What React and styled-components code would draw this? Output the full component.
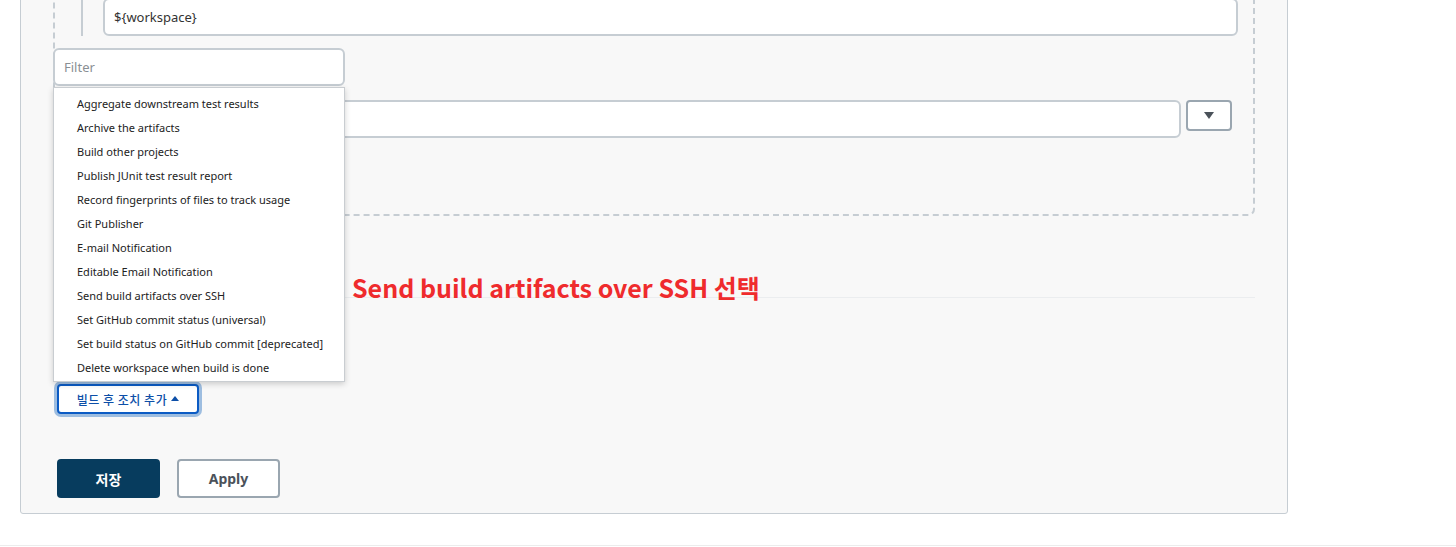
import styled, { createGlobalStyle } from 'styled-components';

const GlobalStyle = createGlobalStyle`
    html, body {
        margin: 0;
        padding: 0;
        background: #ffffff;
    }
    body {
        font-family: "Noto Sans", "Noto Sans CJK KR", sans-serif;
        color: #333;
    }
`;

const actions = [
    'Aggregate downstream test results',
    'Archive the artifacts',
    'Build other projects',
    'Publish JUnit test result report',
    'Record fingerprints of files to track usage',
    'Git Publisher',
    'E-mail Notification',
    'Editable Email Notification',
    'Send build artifacts over SSH',
    'Set GitHub commit status (universal)',
    'Set build status on GitHub commit [deprecated]',
    'Delete workspace when build is done',
];

const App = () => {
    return (
        <Page>
            <GlobalStyle />
            <Panel>
                <DashedBox>
                    <Nested>
                        <TextInput defaultValue="${workspace}" />
                    </Nested>
                    <SelectRow>
                        <TextInput />
                        <ArrowButton>
                            <span className="tri" />
                        </ArrowButton>
                    </SelectRow>
                </DashedBox>

                <Section>
                    <Annotation>Send build artifacts over SSH 선택</Annotation>
                </Section>

                <AddWrap>
                    <Popup>
                        <Filter placeholder="Filter" />
                        <Menu>
                            {actions.map((a) => (
                                <MenuItem key={a}>{a}</MenuItem>
                            ))}
                        </Menu>
                    </Popup>
                    <AddButton>
                        빌드 후 조치 추가 <span className="up" />
                    </AddButton>
                </AddWrap>

                <Footer>
                    <SaveButton>저장</SaveButton>
                    <ApplyButton>Apply</ApplyButton>
                </Footer>
            </Panel>
            <BottomRule />
        </Page>
    );
};

const Page = styled.div`
    height: 547px;
    overflow: hidden;
`;

const Panel = styled.div`
    margin: -71px 0 0 20px;
    width: 1202px;
    padding: 20px 32px 15px 32px;
    background: #f8f8f8;
    border: 1px solid #c6cdd3;
    border-radius: 3px;
`;

const DashedBox = styled.div`
    border: 2px dashed #c6cdd3;
    border-radius: 7px;
    padding: 10px 15px 76px 26px;
    width: 1157px;
`;

const Nested = styled.div`
    border-left: 2px solid #c6cdd3;
    padding: 36px 0 0 20px;
`;

const TextInput = styled.input`
    box-sizing: border-box;
    display: block;
    width: 100%;
    height: 38px;
    padding: 0 9px;
    border: 2px solid #c6cdd3;
    border-radius: 6px;
    background: #fff;
    font-family: "Noto Sans", sans-serif;
    font-size: 13px;
    color: #333;
    outline: none;
`;

const SelectRow = styled.div`
    display: flex;
    align-items: flex-start;
    gap: 5px;
    margin: 64px 6px 0 0;
    ${TextInput} {
        flex: 1;
    }
`;

const ArrowButton = styled.button`
    box-sizing: border-box;
    width: 46px;
    height: 31px;
    border: 2px solid #9aa6b0;
    border-radius: 4px;
    background: #fff;
    display: flex;
    align-items: center;
    justify-content: center;
    padding: 0;
    .tri {
        width: 0;
        height: 0;
        border-left: 5px solid transparent;
        border-right: 5px solid transparent;
        border-top: 7px solid #4b525a;
    }
`;

const Section = styled.div`
    position: relative;
    margin-top: 81px;
    border-top: 1px solid #ebedef;
    height: 86px;
`;

const Annotation = styled.div`
    position: absolute;
    left: 299px;
    top: -27px;
    font-family: "Noto Sans CJK KR", "Noto Sans", sans-serif;
    font-weight: 700;
    font-size: 25px;
    color: #ef2b2d;
    white-space: nowrap;
    line-height: 32px;
`;

const AddWrap = styled.div`
    position: relative;
    padding-left: 4px;
`;

const Popup = styled.div`
    position: absolute;
    left: 0;
    bottom: calc(100% + 2px);
    width: 292px;
    z-index: 2;
`;

const Filter = styled.input`
    box-sizing: border-box;
    display: block;
    width: 100%;
    height: 38px;
    padding: 0 9px;
    border: 2px solid #c6cdd3;
    border-radius: 6px;
    background: #fff;
    font-family: "Noto Sans", sans-serif;
    font-size: 13px;
    outline: none;
    &::placeholder {
        color: #8a8f94;
    }
`;

const Menu = styled.ul`
    list-style: none;
    margin: 1px 0 0 0;
    padding: 4px 0 1px 0;
    background: #fff;
    border: 1px solid #c9cdd1;
    box-shadow: 0 2px 6px rgba(0, 0, 0, 0.18);
`;

const MenuItem = styled.li`
    height: 24px;
    line-height: 24px;
    padding-left: 23px;
    font-family: "Noto Sans", sans-serif;
    font-size: 11px;
    color: #222;
    white-space: nowrap;
`;

const AddButton = styled.button`
    box-sizing: border-box;
    height: 30px;
    width: 142px;
    display: flex;
    align-items: center;
    justify-content: center;
    gap: 4px;
    border: 2px solid #0b5bc4;
    border-radius: 4px;
    background: #fff;
    box-shadow: 0 0 0 3px #9dbde0;
    font-family: "Noto Sans CJK KR", sans-serif;
    font-size: 12px;
    font-weight: 500;
    letter-spacing: 0.5px;
    color: #0d4fa8;
    padding: 0;
    .up {
        width: 0;
        height: 0;
        border-left: 4px solid transparent;
        border-right: 4px solid transparent;
        border-bottom: 5px solid #0d4fa8;
        margin-bottom: 1px;
    }
`;

const Footer = styled.div`
    display: flex;
    gap: 17px;
    margin-top: 45px;
    padding-left: 4px;
`;

const SaveButton = styled.button`
    box-sizing: border-box;
    width: 103px;
    height: 39px;
    border: none;
    border-radius: 4px;
    background: #073c5e;
    color: #fff;
    font-family: "Noto Sans CJK KR", sans-serif;
    font-weight: 700;
    font-size: 14px;
`;

const ApplyButton = styled.button`
    box-sizing: border-box;
    width: 103px;
    height: 39px;
    border: 2px solid #9aa6b0;
    border-radius: 4px;
    background: #fff;
    color: #4b525a;
    font-family: "Noto Sans", sans-serif;
    font-weight: 700;
    font-size: 14px;
`;

const BottomRule = styled.div`
    margin-top: 31px;
    border-top: 1px solid #ececec;
`;

export default App;
